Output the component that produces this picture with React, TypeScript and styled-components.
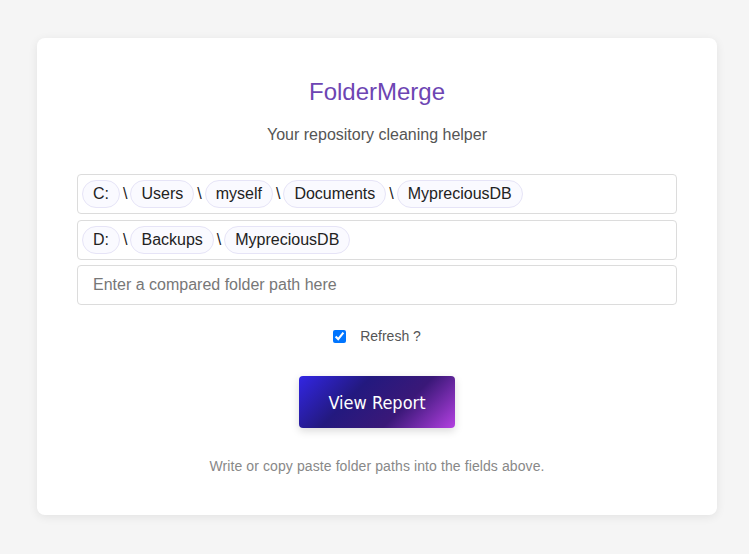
import React from "react";
import styled, { createGlobalStyle } from "styled-components";

const Global = createGlobalStyle`
  html, body { margin: 0; padding: 0; background: #f5f5f5; }
  body { font-family: "Liberation Sans", Arial, sans-serif; }
  * { box-sizing: border-box; }
`;

const Page = styled.div`
  width: 749px;
  height: 554px;
  padding: 38px 32px 0 37px;
`;

const Card = styled.div`
  width: 680px;
  height: 477px;
  background: #fff;
  border-radius: 8px;
  box-shadow: 0 2px 10px rgba(0, 0, 0, 0.08);
  padding: 40px 40px 0 40px;
  display: flex;
  flex-direction: column;
  align-items: center;
`;

const Title = styled.h1`
  margin: 0;
  font-size: 24px;
  font-weight: 400;
  line-height: 28px;
  color: #6d45b3;
`;

const Subtitle = styled.p`
  margin: 19px 0 0;
  font-size: 16px;
  line-height: 20px;
  color: #555;
`;

const Fields = styled.div`
  margin-top: 29px;
  width: 600px;
  display: flex;
  flex-direction: column;
  gap: 5.5px;
`;

const PathRow = styled.div`
  height: 40px;
  border: 1px solid #dcdcdc;
  border-radius: 4px;
  padding: 0 4px;
  display: flex;
  align-items: center;
  gap: 3px;
`;

const Pill = styled.span`
  height: 28px;
  padding: 0 10px;
  border: 1px solid #e6e4f7;
  background: #fafaff;
  border-radius: 14px;
  display: inline-flex;
  align-items: center;
  font-size: 16px;
  color: #222;
`;

const Sep = styled.span`
  font-size: 16px;
  color: #222;
`;

const Input = styled.input`
  height: 40px;
  width: 100%;
  border: 1px solid #dcdcdc;
  border-radius: 4px;
  padding: 0 15px;
  font-family: "Liberation Sans", Arial, sans-serif;
  font-size: 16px;
  color: #222;
  outline: none;
  &::placeholder { color: #777; }
`;

const CheckRow = styled.label`
  margin-top: 23px;
  display: flex;
  align-items: center;
  gap: 14px;
  font-size: 14px;
  color: #555;
  input { margin: 0; width: 13px; height: 13px; }
`;

const Button = styled.button`
  margin-top: 32px;
  width: 156px;
  height: 52px;
  border: none;
  border-radius: 4px;
  background: linear-gradient(135deg, #3226e4 0%, #23197f 35%, #3a1878 65%, #b440e2 100%);
  color: #fff;
  font-family: "DejaVu Sans Condensed", "DejaVu Sans", sans-serif;
  font-size: 18px;
  box-shadow: 0 3px 8px rgba(0, 0, 0, 0.15);
  cursor: pointer;
`;

const Note = styled.p`
  margin: 30px 0 0;
  font-size: 14px;
  color: #888;
  letter-spacing: 0.1px;
`;

const paths = [
  ["C:", "Users", "myself", "Documents", "MypreciousDB"],
  ["D:", "Backups", "MypreciousDB"],
];

export default function App() {
  return (
    <>
      <Global />
      <Page>
        <Card>
          <Title>FolderMerge</Title>
          <Subtitle>Your repository cleaning helper</Subtitle>
          <Fields>
            {paths.map((parts, i) => (
              <PathRow key={i}>
                {parts.map((p, j) => (
                  <React.Fragment key={j}>
                    {j > 0 && <Sep>\</Sep>}
                    <Pill>{p}</Pill>
                  </React.Fragment>
                ))}
              </PathRow>
            ))}
            <Input placeholder="Enter a compared folder path here" />
          </Fields>
          <CheckRow>
            <input type="checkbox" defaultChecked />
            Refresh ?
          </CheckRow>
          <Button>View Report</Button>
          <Note>Write or copy paste folder paths into the fields above.</Note>
        </Card>
      </Page>
    </>
  );
}
